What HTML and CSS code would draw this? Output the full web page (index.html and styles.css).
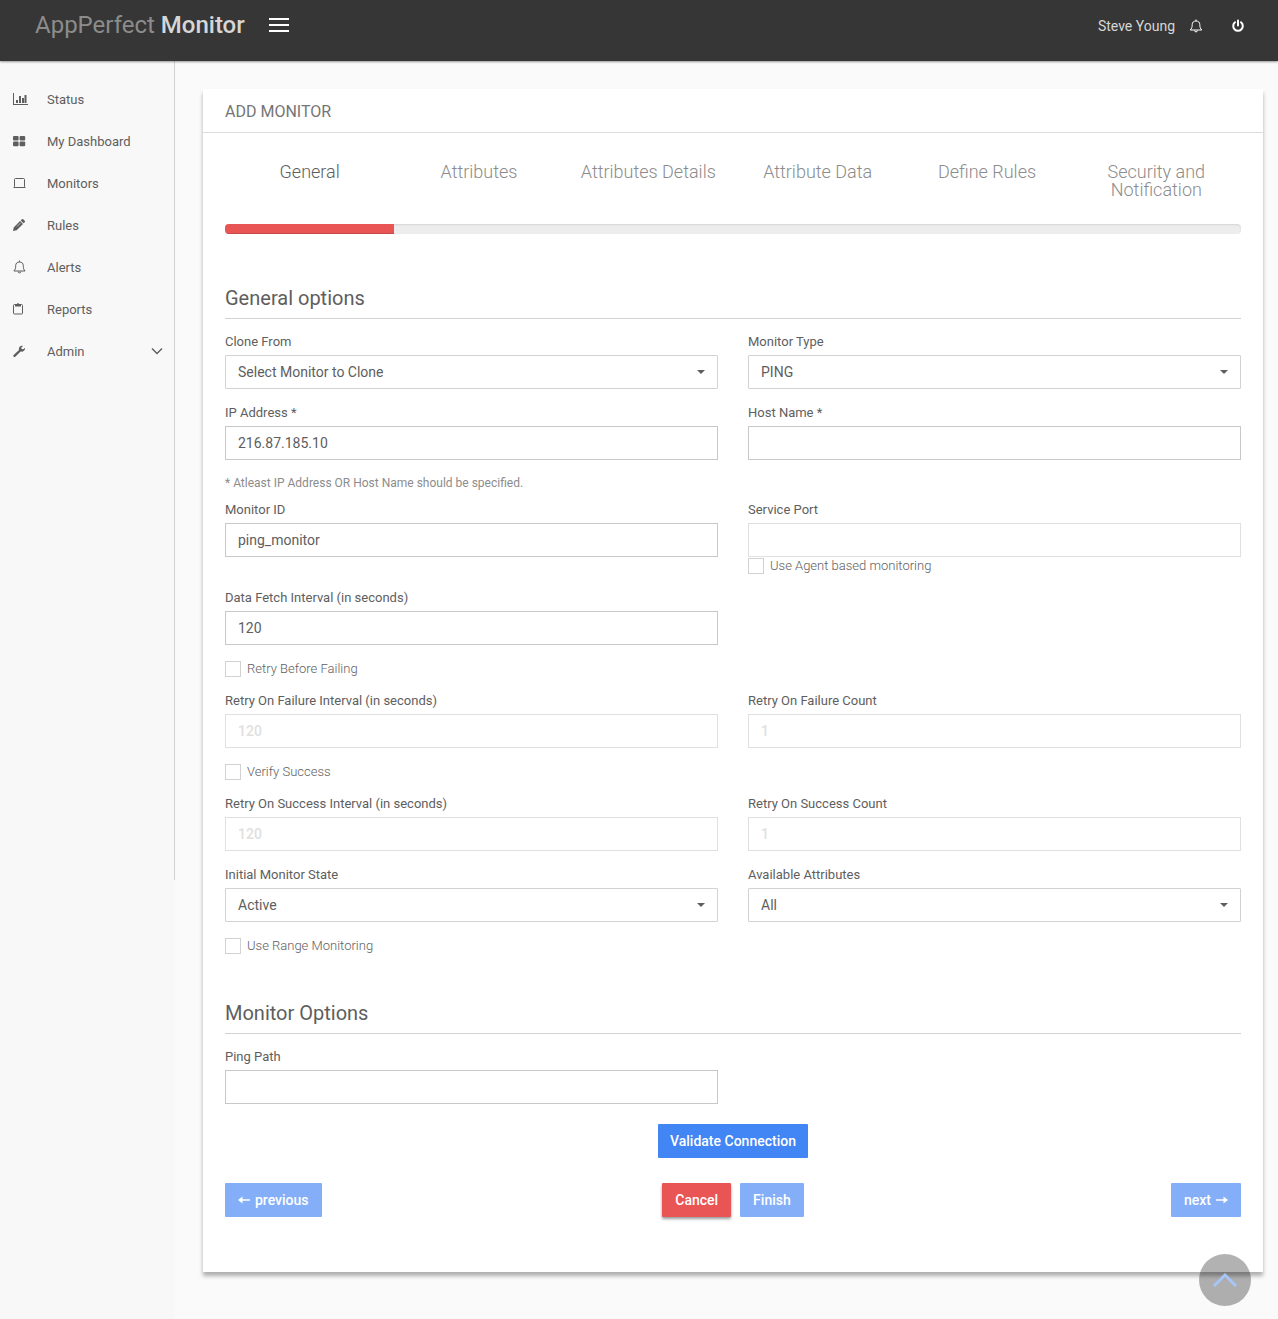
FILE: index.html
```html
<!DOCTYPE html>
<html lang="en">
<head>
    <meta charset="UTF-8">
    <meta name="viewport" content="width=device-width, initial-scale=1.0">
    <title>AppPerfect Monitor</title>
    <link rel="stylesheet" href="styles.css">
</head>
<body>
    <header class="topbar">
        <a href="#" class="brand">AppPerfect <span>Monitor</span></a>
        <button type="button" class="menu-toggle" aria-label="Toggle menu">
            <svg width="20" height="16" viewBox="0 0 20 16"><path d="M0 2h20M0 8h20M0 14h20" stroke="#fff" stroke-width="2"/></svg>
        </button>
        <div class="user-nav">
            <a href="#">Steve Young</a>
            <a href="#" class="user-bell" aria-label="Alerts">
                <svg width="14" height="14" viewBox="0 0 14 14" fill="none" stroke="currentColor"><path d="M1.2 11C2.6 9.8 3.2 8.2 3.2 5.6 3.2 3.4 4.6 2 7 2s3.800 1.400 3.800 3.600c0 2.600.6 4.200 2 5.400z"/><path d="M7 .5V2M5.600 11.500a1.400 1.400 0 0 0 2.800 0"/></svg>
            </a>
            <a href="#" class="user-power" aria-label="Log out">
                <svg width="14" height="14" viewBox="0 0 14 14" fill="none" stroke="currentColor" stroke-width="2" stroke-linecap="round"><path d="M4 3.200a4.800 4.800 0 1 0 6 0M7 1.500v5"/></svg>
            </a>
        </div>
    </header>

    <div class="wrapper">
        <aside class="sidebar">
            <nav class="side-nav">
                <a href="#">
                    <svg width="16" height="14" viewBox="0 0 16 14" fill="currentColor"><path d="M0 1h1v11h14v1H0zM3 8h2v3H3zM6 4h2v7H6zM9 6h2v5H9zM11.500 3h2v8h-2z"/></svg>
                    Status
                </a>
                <a href="#">
                    <svg width="16" height="14" viewBox="0 0 16 14" fill="currentColor"><rect x="0" y="2" width="5.600" height="4.600" rx="1"/><rect x="6.600" y="2" width="5.600" height="4.600" rx="1"/><rect x="0" y="7.600" width="5.600" height="4.600" rx="1"/><rect x="6.600" y="7.600" width="5.600" height="4.600" rx="1"/></svg>
                    My Dashboard
                </a>
                <a href="#">
                    <svg width="16" height="14" viewBox="0 0 16 14" fill="none" stroke="currentColor"><rect x="1.500" y="2.500" width="10" height="9" rx="1"/><path d="M.5 11.500h4M8.500 11.500h4M5.500 11.500h2"/></svg>
                    Monitors
                </a>
                <a href="#">
                    <svg width="16" height="14" viewBox="0 0 16 14" fill="currentColor"><path d="M0 13l.7-3.600L7 3.100l3 3L3.700 12.300zM7.700 2.400l1.100-1.100q.7-.6 1.400 0l1.500 1.500q.7.700 0 1.400l-1.100 1.100z"/><path d="M4 8.500l3.500-3.500" stroke="#f8f8f8" stroke-width=".6"/></svg>
                    Rules
                </a>
                <a href="#">
                    <svg width="16" height="14" viewBox="0 0 16 14" fill="none" stroke="currentColor"><path d="M.9 11C2.300 9.800 2.700 8.200 2.700 5.600 2.700 3.400 4.100 2 6.500 2s3.800 1.400 3.800 3.600c0 2.600.4 4.200 1.800 5.400z"/><path d="M6.500.5V2M5.100 11.500a1.400 1.400 0 0 0 2.800 0"/></svg>
                    Alerts
                </a>
                <a href="#">
                    <svg width="16" height="14" viewBox="0 0 16 14" fill="none" stroke="currentColor"><rect x=".5" y="2.500" width="9" height="9.500" rx="1"/><path d="M2 4.500V3l1.900-.5q0-1.500 1.100-1.500t1.100 1.500L8 3v1.500z" fill="currentColor" stroke="none"/></svg>
                    Reports
                </a>
                <a href="#">
                    <svg width="16" height="14" viewBox="0 0 16 14" fill="currentColor"><path d="M.4 11.200L6 6C5.400 3.800 6.900 1.500 9.500 1.700L10 1.900 8.300 3.600l.3 1.500 1.600.2 1.700-1.400.2.300C12 6.800 9.700 8.100 7.600 7.500L2.300 12.700Q1.400 13.300.7 12.700T.4 11.200z"/></svg>
                    Admin
                    <svg class="arrow" width="12" height="8" viewBox="0 0 12 8" fill="none" stroke="currentColor" stroke-width="1.400"><path d="M1 1.500l5 5 5-5"/></svg>
                </a>
            </nav>
        </aside>

        <main class="content">
            <form class="panel">
                <h1 class="panel-title">ADD MONITOR</h1>
                <div class="panel-body">
                    <ol class="steps">
                        <li class="active">General</li>
                        <li>Attributes</li>
                        <li>Attributes Details</li>
                        <li>Attribute Data</li>
                        <li>Define Rules</li>
                        <li>Security and Notification</li>
                    </ol>
                    <div class="progress">
                        <div class="progress-bar"></div>
                    </div>

                    <h2>General options</h2>
                    <div class="row">
                        <div class="field">
                            <label for="clone">Clone From</label>
                            <div class="select">
                                <select id="clone"><option>Select Monitor to Clone</option></select>
                            </div>
                        </div>
                        <div class="field">
                            <label for="type">Monitor Type</label>
                            <div class="select">
                                <select id="type"><option>PING</option></select>
                            </div>
                        </div>
                    </div>
                    <div class="row">
                        <div class="field">
                            <label for="ip">IP Address *</label>
                            <input type="text" id="ip" value="216.87.185.10">
                        </div>
                        <div class="field">
                            <label for="host">Host Name *</label>
                            <input type="text" id="host">
                        </div>
                    </div>
                    <p class="hint">* Atleast IP Address OR Host Name should be specified.</p>
                    <div class="row">
                        <div class="field">
                            <label for="monitor-id">Monitor ID</label>
                            <input type="text" id="monitor-id" value="ping_monitor">
                        </div>
                        <div class="field has-check">
                            <label for="port">Service Port</label>
                            <input type="text" id="port" disabled>
                            <label class="check"><input type="checkbox"> Use Agent based monitoring</label>
                        </div>
                    </div>
                    <div class="row">
                        <div class="field">
                            <label for="interval">Data Fetch Interval (in seconds)</label>
                            <input type="text" id="interval" value="120">
                        </div>
                    </div>
                    <div class="check-row">
                        <label class="check"><input type="checkbox"> Retry Before Failing</label>
                    </div>
                    <div class="row">
                        <div class="field">
                            <label for="fail-interval">Retry On Failure Interval (in seconds)</label>
                            <input type="text" id="fail-interval" value="120" disabled>
                        </div>
                        <div class="field">
                            <label for="fail-count">Retry On Failure Count</label>
                            <input type="text" id="fail-count" value="1" disabled>
                        </div>
                    </div>
                    <div class="check-row">
                        <label class="check"><input type="checkbox"> Verify Success</label>
                    </div>
                    <div class="row">
                        <div class="field">
                            <label for="ok-interval">Retry On Success Interval (in seconds)</label>
                            <input type="text" id="ok-interval" value="120" disabled>
                        </div>
                        <div class="field">
                            <label for="ok-count">Retry On Success Count</label>
                            <input type="text" id="ok-count" value="1" disabled>
                        </div>
                    </div>
                    <div class="row">
                        <div class="field">
                            <label for="state">Initial Monitor State</label>
                            <div class="select">
                                <select id="state"><option>Active</option></select>
                            </div>
                        </div>
                        <div class="field">
                            <label for="attributes">Available Attributes</label>
                            <div class="select">
                                <select id="attributes"><option>All</option></select>
                            </div>
                        </div>
                    </div>
                    <div class="check-row">
                        <label class="check"><input type="checkbox"> Use Range Monitoring</label>
                    </div>

                    <h2>Monitor Options</h2>
                    <div class="row">
                        <div class="field">
                            <label for="path">Ping Path</label>
                            <input type="text" id="path">
                        </div>
                    </div>

                    <div class="validate">
                        <button type="button" class="btn">Validate Connection</button>
                    </div>
                    <div class="actions">
                        <button type="button" class="btn previous" disabled>
                            <svg width="12" height="10" viewBox="0 0 12 10"><path d="M0 5l4.500-3.500v2.700H12v1.600H4.500v2.700z" fill="#fff"/></svg>
                            previous
                        </button>
                        <div class="actions-center">
                            <button type="button" class="btn cancel">Cancel</button>
                            <button type="button" class="btn" disabled>Finish</button>
                        </div>
                        <button type="button" class="btn next" disabled>
                            next
                            <svg width="12" height="10" viewBox="0 0 12 10"><path d="M12 5L7.500 1.500v2.700H0v1.600h7.500v2.700z" fill="#fff"/></svg>
                        </button>
                    </div>
                </div>
            </form>
        </main>
    </div>

    <a href="#" class="scroll-top" aria-label="Back to top">
        <svg width="26" height="16" viewBox="0 0 26 16" fill="none" stroke="#a7c5f7" stroke-width="3"><path d="M2 14L13 3l11 11"/></svg>
    </a>
</body>
</html>
```

FILE: styles.css
```css
* {
    box-sizing: border-box;
}
body {
    margin: 0;
    min-height: 100vh;
    display: flex;
    flex-direction: column;
    font-family: Roboto, "Liberation Sans", sans-serif;
    font-size: 13px;
    line-height: 20px;
    color: #5e5e5e;
    background: #fafafa;
}
a {
    color: inherit;
    text-decoration: none;
}
svg {
    display: block;
    flex: none;
}

/* top bar */
.topbar {
    display: flex;
    align-items: center;
    min-height: 61px;
    padding: 0 33px 12px 35px;
    background: #363636;
    box-shadow: 0 1px 2px rgba(0, 0, 0, 0.4);
    position: relative;
}
.brand {
    font-size: 24px;
    line-height: 28px;
    color: #8c8c8c;
}
.brand span {
    color: #d6d6d6;
    font-weight: 500;
}
.menu-toggle {
    margin-left: 24px;
    padding: 0;
    border: none;
    background: none;
    cursor: pointer;
}
.user-nav {
    display: flex;
    align-items: center;
    margin-left: auto;
    padding-top: 2px;
    font-size: 14px;
    color: #d6d6d6;
}
.user-bell {
    margin-left: 14px;
    color: #fff;
}
.user-power {
    margin-left: 28px;
    color: #fff;
}

/* sidebar */
.wrapper {
    flex: 1;
    display: flex;
}
.sidebar {
    flex: none;
    width: 175px;
    background: #f8f8f8;
}
.side-nav {
    min-height: 819px;
    padding-top: 18px;
    border-right: 1px solid #d2d2d2;
}
.side-nav a {
    display: flex;
    align-items: center;
    gap: 18px;
    height: 42px;
    padding: 0 11px 0 13px;
}
.side-nav svg {
    margin-bottom: 2px;
}
.side-nav .arrow {
    margin-left: auto;
}

/* panel */
.content {
    flex: 1;
    min-width: 0;
    padding: 28px 15px 47px 28px;
}
.panel {
    background: #fff;
    box-shadow: 0 4px 4px rgba(0, 0, 0, 0.3);
}
.panel-title {
    margin: 0;
    padding: 13px 22px 10px;
    border-bottom: 1px solid #ddd;
    font-size: 16px;
    line-height: 20px;
    font-weight: 400;
    color: #757575;
}
.panel-body {
    padding: 30px 22px 55px;
}
.steps {
    display: grid;
    grid-template-columns: repeat(6, 1fr);
    margin: 0 0 25px;
    padding: 0;
    list-style: none;
    font-size: 18px;
    line-height: 18px;
    font-weight: 300;
    text-align: center;
    color: #8c8c8c;
}
.steps li {
    padding: 0 15px;
}
.steps .active {
    color: #5e5e5e;
}
.progress {
    height: 10px;
    margin-bottom: 50px;
    border-radius: 4px;
    overflow: hidden;
    background: #ededed;
    box-shadow: inset 0 1px 2px rgba(0, 0, 0, 0.1);
}
.progress-bar {
    width: calc(100% / 6);
    height: 100%;
    background: #e95555;
    box-shadow: inset 0 -1px 0 rgba(0, 0, 0, 0.15);
}
h2 {
    margin: 32px 0 12px;
    padding-bottom: 6px;
    border-bottom: 1px solid #d2d2d2;
    font-size: 20px;
    line-height: 28px;
    font-weight: 400;
}

/* form */
.row {
    display: grid;
    grid-template-columns: 1fr 1fr;
    column-gap: 30px;
}
.field {
    margin-bottom: 13px;
}
.field > label {
    display: block;
    margin-bottom: 2px;
    line-height: 22px;
}
.field input[type="text"],
.field select {
    display: block;
    width: 100%;
    height: 34px;
    padding: 0 12px;
    border: 1px solid #c8c8c8;
    border-radius: 0;
    background: #fff;
    font: inherit;
    font-size: 14px;
    color: #5e5e5e;
}
.field select {
    appearance: none;
    border-color: #d2d2d2;
    border-radius: 1px;
}
.field input[type="text"]:disabled {
    border-color: #e0e0e0;
    font-weight: 500;
    color: #e0e0e0;
}
.select {
    position: relative;
}
.select::after {
    content: "";
    position: absolute;
    top: 15px;
    right: 13px;
    border: 4px solid transparent;
    border-top-color: #5e5e5e;
    border-bottom: 0;
    pointer-events: none;
}
.hint {
    margin: 0 0 6px;
    font-size: 12px;
    color: #8c8c8c;
}
.field.has-check {
    margin-bottom: 12px;
}
.check-row {
    padding: 2px 0 12px;
}
.check,
.field > .check {
    display: flex;
    align-items: center;
    gap: 6px;
    margin: 0;
    line-height: 18px;
    font-weight: 300;
}
.check input {
    appearance: none;
    width: 16px;
    height: 16px;
    margin: 0;
    border: 1px solid #d2d2d2;
    background: #fff;
}

/* buttons */
.btn {
    display: flex;
    align-items: center;
    gap: 5px;
    height: 34px;
    padding: 0 13px;
    border: none;
    border-radius: 1px;
    background: #4285f4;
    font: inherit;
    font-size: 14px;
    font-weight: 500;
    color: #fff;
    cursor: pointer;
}
.btn:disabled {
    background: #84aff8;
    cursor: default;
}
.btn.cancel {
    background: #e95555;
    box-shadow: 0 2px 3px rgba(0, 0, 0, 0.4);
}
.validate {
    display: flex;
    justify-content: center;
    margin: 7px 0 25px;
}
.validate .btn {
    padding: 0 12px;
}
.actions {
    display: grid;
    grid-template-columns: 1fr auto 1fr;
}
.actions-center {
    display: flex;
    gap: 9px;
}
.previous {
    justify-self: start;
}
.next {
    justify-self: end;
}

.scroll-top {
    position: fixed;
    right: 27px;
    bottom: 13px;
    width: 52px;
    height: 52px;
    display: flex;
    align-items: center;
    justify-content: center;
    border-radius: 50%;
    background: rgba(0, 0, 0, 0.3);
}
```
